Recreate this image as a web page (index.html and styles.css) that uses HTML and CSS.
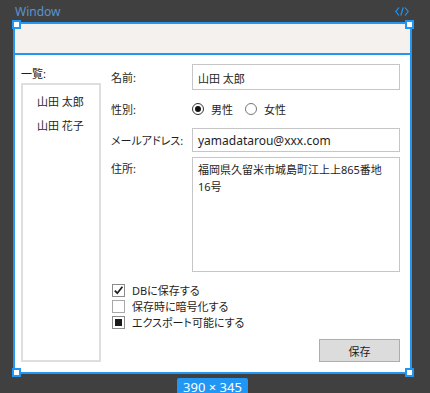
FILE: index.html
```html
<!DOCTYPE html>
<html>
<head>
	<title>Window</title>
	<link rel="stylesheet" href="styles.css">
</head>
<body>
	<div class="page">
		<div class="header">
			<span class="caption">Window</span>
			<svg class="code-icon" width="14" height="9" viewBox="0 0 14 9">
				<polyline points="4,0.5 0.8,4.5 4,8.5" fill="none" stroke="#2196f3" stroke-width="1.2"/>
				<line x1="8.2" y1="0.5" x2="5.8" y2="8.5" stroke="#2196f3" stroke-width="1.2"/>
				<polyline points="10,0.5 13.2,4.5 10,8.5" fill="none" stroke="#2196f3" stroke-width="1.2"/>
			</svg>
		</div>

		<div class="window">
			<span class="handle tl"></span>
			<span class="handle tr"></span>
			<span class="handle bl"></span>
			<span class="handle br"></span>

			<div class="titlebar"></div>

			<div class="content">
				<div class="list-pane">
					<div class="list-label">一覧:</div>
					<ul class="list">
						<li>山田 太郎</li>
						<li>山田 花子</li>
					</ul>
				</div>

				<div class="form">
					<div class="row name-row">
						<span class="label">名前:</span>
						<div class="field">山田 太郎</div>
					</div>
					<div class="row gender-row">
						<span class="label">性別:</span>
						<span class="radio checked"></span><span class="radio-text">男性</span>
						<span class="radio"></span><span class="radio-text">女性</span>
					</div>
					<div class="row email-row">
						<span class="label">メールアドレス:</span>
						<div class="field latin">yamadatarou@xxx.com</div>
					</div>
					<div class="row address-row">
						<span class="label">住所:</span>
						<div class="field textarea">福岡県久留米市城島町江上上865番地<br>16号</div>
					</div>

					<div class="checks">
						<div class="check">
							<span class="box">
								<svg width="11" height="11" viewBox="0 0 11 11"><polyline points="1.8,5.6 4.3,8.2 9.4,1.8" fill="none" stroke="#222" stroke-width="1.8"/></svg>
							</span>
							DBに保存する
						</div>
						<div class="check">
							<span class="box light"></span>
							保存時に暗号化する
						</div>
						<div class="check">
							<span class="box"><span class="mixed"></span></span>
							エクスポート可能にする
						</div>
					</div>

					<div class="actions">
						<button class="save-btn">保存</button>
					</div>
				</div>
			</div>
		</div>

		<div class="badge-wrap">
			<div class="size-badge">390 × 345</div>
		</div>
	</div>
</body>
</html>
```

FILE: styles.css
```css
body {
	margin: 0;
	background: #404040;
	font-family: "Noto Sans", "Noto Sans CJK JP", sans-serif;
	font-size: 11px;
	color: #1e1e1e;
	font-feature-settings: "palt";
}

.page {
	width: 430px;
	height: 393px;
	overflow: hidden;
}

.header {
	display: flex;
	justify-content: space-between;
	align-items: center;
	height: 22px;
	padding: 0 21px 0 15px;
	box-sizing: border-box;
}

.caption {
	color: #5b94cf;
	font-size: 12px;
}

.window {
	position: relative;
	margin-left: 13px;
	width: 399px;
	height: 352px;
	box-sizing: border-box;
	border: 2px solid #2196f3;
	background: #fff;
	display: flex;
	flex-direction: column;
}

.handle {
	position: absolute;
	width: 9px;
	height: 9px;
	box-sizing: border-box;
	background: #fff;
	border: 2px solid #2196f3;
}

.handle.tl { left: -3px; top: -4px; }
.handle.tr { right: -4px; top: -4px; }
.handle.bl { left: -3px; bottom: -5px; }
.handle.br { right: -4px; bottom: -5px; }

.titlebar {
	height: 29px;
	background: #f5f1ee;
	border-bottom: 2px solid #2196f3;
}

.content {
	flex: 1;
	display: flex;
	padding: 9px 10px 10px 6px;
}

.list-pane {
	width: 80px;
	margin-right: 10px;
	display: flex;
	flex-direction: column;
}

.list-label {
	height: 19px;
	line-height: 19px;
}

.list {
	flex: 1;
	margin: 0;
	padding: 5px 0 0 14px;
	list-style: none;
	border: 2px solid #dedede;
}

.list li {
	line-height: 24px;
}

.form {
	flex: 1;
	display: flex;
	flex-direction: column;
}

.row {
	display: flex;
	align-items: center;
}

.label {
	width: 81px;
	flex: none;
}

.field {
	flex: 1;
	height: 100%;
	box-sizing: border-box;
	border: 1px solid #c6c6c6;
	padding: 1px 5px 0;
	display: flex;
	align-items: center;
}

.field.latin {
	font-size: 12px;
}

.name-row { height: 26px; }
.gender-row { height: 38px; }
.email-row { height: 24px; }

.address-row {
	align-items: flex-start;
	margin-top: 5px;
	height: 115px;
}

.address-row .label {
	padding-top: 3px;
	line-height: 17px;
}

.field.textarea {
	display: block;
	padding: 3px 5px;
	line-height: 17px;
}

.radio {
	width: 12px;
	height: 12px;
	box-sizing: border-box;
	border: 1px solid #777;
	border-radius: 50%;
	display: flex;
	align-items: center;
	justify-content: center;
	margin-right: 7px;
}

.radio.checked {
	border-color: #333;
}

.radio.checked::after {
	content: "";
	width: 6px;
	height: 6px;
	border-radius: 50%;
	background: #111;
}

.radio-text {
	margin-right: 12px;
}

.checks {
	margin-top: 10px;
}

.check {
	display: flex;
	align-items: center;
	height: 16px;
}

.box {
	width: 13px;
	height: 13px;
	box-sizing: border-box;
	border: 1px solid #8c8c8c;
	margin: 0 7px 0 1px;
	display: flex;
	align-items: center;
	justify-content: center;
}

.box.light {
	border-color: #a8a8a8;
}

.mixed {
	width: 7px;
	height: 7px;
	background: #1a1a1a;
}

.actions {
	margin-top: auto;
	display: flex;
	justify-content: flex-end;
}

.save-btn {
	width: 81px;
	height: 23px;
	padding: 0;
	background: #dcdcdc;
	border: 1px solid #adadad;
	font: inherit;
	color: #1e1e1e;
}

.badge-wrap {
	margin-left: 13px;
	width: 399px;
	padding-top: 4px;
	display: flex;
	justify-content: center;
}

.size-badge {
	background: #2196f3;
	color: #fff;
	font-size: 13px;
	line-height: 18px;
	padding: 0 6px;
	border-radius: 2px;
}
```
